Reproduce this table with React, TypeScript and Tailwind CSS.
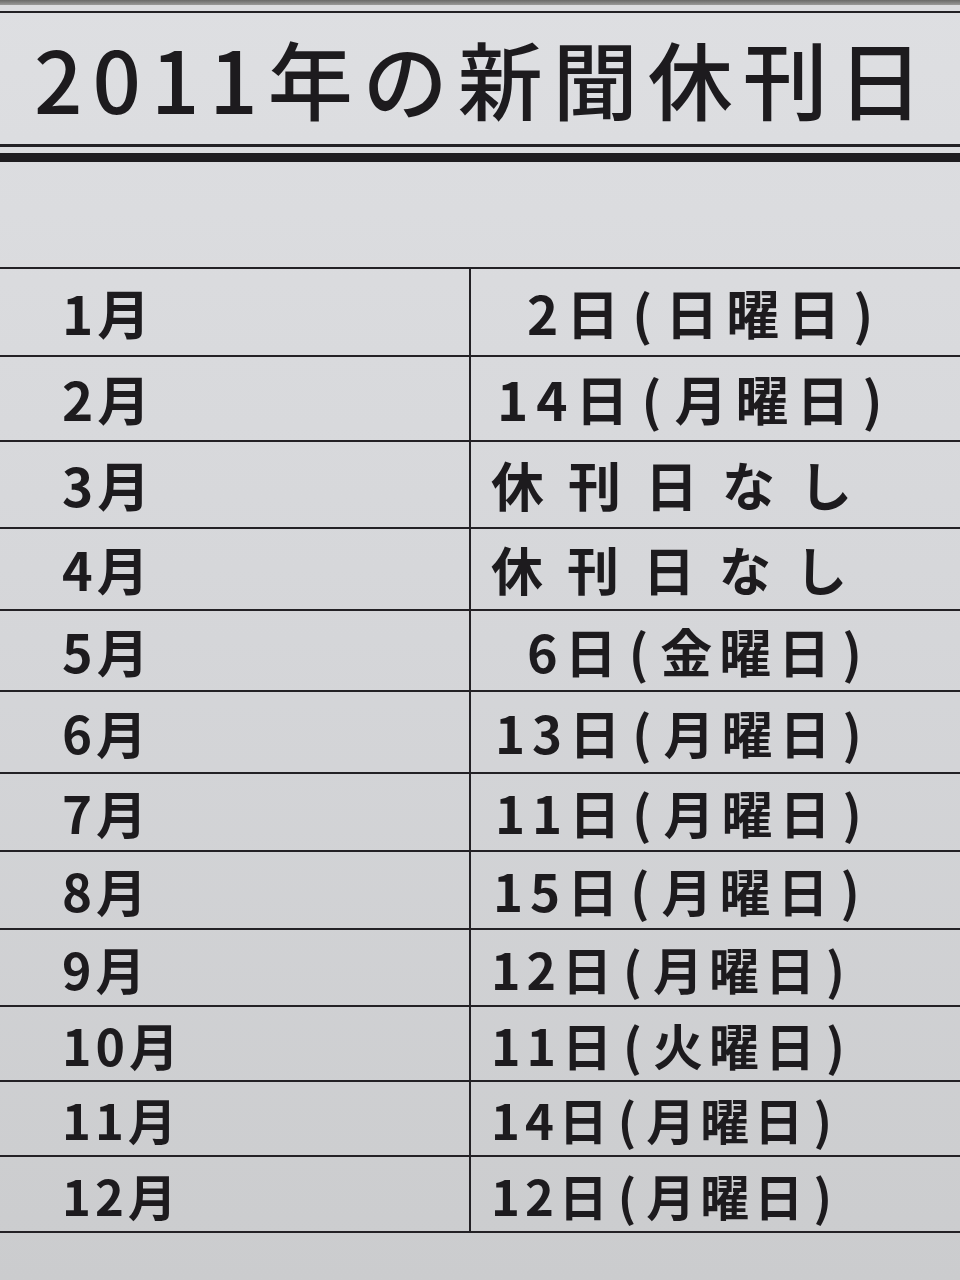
import React from 'react';

interface Row {
  month: string;
  day: string;
  height: string;
  size: string;
  dayClass: string;
}

const rows: Row[] = [
  { month: '1月', day: '2日(日曜日)', height: 'h-[88px]', size: 'text-[53px]', dayClass: 'pl-[56px] tracking-[8px]' },
  { month: '2月', day: '14日(月曜日)', height: 'h-[85px]', size: 'text-[53px]', dayClass: 'pl-[26px] tracking-[8px]' },
  { month: '3月', day: '休刊日なし', height: 'h-[87px]', size: 'text-[53px]', dayClass: 'pl-[20px] tracking-[24px]' },
  { month: '4月', day: '休刊日なし', height: 'h-[82px]', size: 'text-[52px]', dayClass: 'pl-[20px] tracking-[24px]' },
  { month: '5月', day: '6日(金曜日)', height: 'h-[81px]', size: 'text-[52px]', dayClass: 'pl-[56px] tracking-[7px]' },
  { month: '6月', day: '13日(月曜日)', height: 'h-[82px]', size: 'text-[51px]', dayClass: 'pl-[24px] tracking-[7px]' },
  { month: '7月', day: '11日(月曜日)', height: 'h-[78px]', size: 'text-[51px]', dayClass: 'pl-[24px] tracking-[7px]' },
  { month: '8月', day: '15日(月曜日)', height: 'h-[78px]', size: 'text-[51px]', dayClass: 'pl-[22px] tracking-[7px]' },
  { month: '9月', day: '12日(月曜日)', height: 'h-[77px]', size: 'text-[50px]', dayClass: 'pl-[20px] tracking-[6px]' },
  { month: '10月', day: '11日(火曜日)', height: 'h-[75px]', size: 'text-[50px]', dayClass: 'pl-[20px] tracking-[6px]' },
  { month: '11月', day: '14日(月曜日)', height: 'h-[75px]', size: 'text-[49px]', dayClass: 'pl-[20px] tracking-[5px]' },
  { month: '12月', day: '12日(月曜日)', height: 'h-[76px]', size: 'text-[49px]', dayClass: 'pl-[20px] tracking-[5px]' },
];

// parens sit a little apart from the characters around them in the print
const renderDay = (day: string) =>
  day.split(/([()])/).map((part, i) =>
    part === '(' || part === ')' ? (
      <span key={i} className="px-[5px]">
        {part}
      </span>
    ) : (
      <span key={i}>{part}</span>
    )
  );

const App: React.FC = () => {
  return (
    <div
      className="w-[960px] h-[1280px] overflow-hidden bg-linear-to-b from-[#dedfe2] via-[#d5d6d9] to-[#cbccce] text-[#1d1b1e]"
      style={{ fontFamily: '"Noto Sans CJK JP", "Noto Sans", sans-serif' }}
    >
      {/* Top edge of the sheet */}
      <div className="h-[5px] bg-linear-to-b from-[#6a6a68] to-[#9a9a99]" />
      <div className="h-[6px] bg-[#dcdde0]" />
      <div className="h-[2px] bg-[#232125]" />

      {/* Title */}
      <div className="h-[131px] flex items-center pl-[34px] pb-[4px]">
        <h1 className="text-[85px] leading-none tracking-[10px] font-medium whitespace-nowrap">
          2011年の新聞休刊日
        </h1>
      </div>
      <div className="h-[3px] bg-[#232125]" />
      <div className="h-[6px]" />
      <div className="h-[9px] bg-[#1f1d20]" />

      {/* Spacer */}
      <div className="h-[105px]" />

      {/* Table */}
      <div className="border-t-2 border-[#232125]">
        {rows.map((row) => (
          <div key={row.month} className={`flex border-b-2 border-[#232125] ${row.height}`}>
            <div className={`w-[469px] flex items-center pl-[62px] font-semibold leading-none tracking-[4px] ${row.size}`}>
              {row.month}
            </div>
            <div
              className={`flex-1 flex items-center border-l-2 border-[#232125] font-semibold leading-none whitespace-nowrap ${row.size} ${row.dayClass}`}
            >
              {renderDay(row.day)}
            </div>
          </div>
        ))}
      </div>
    </div>
  );
};

export default App;
